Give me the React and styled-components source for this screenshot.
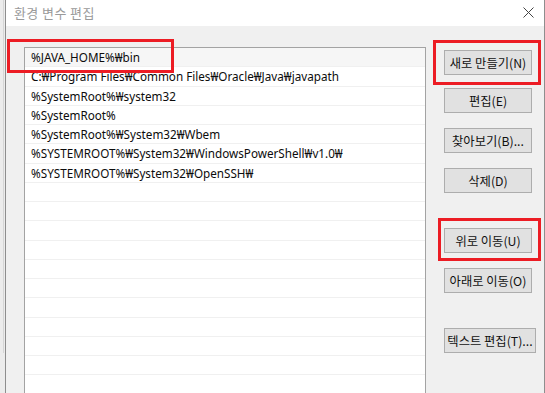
import React from 'react'
import styled, { createGlobalStyle } from 'styled-components'

const GlobalStyle = createGlobalStyle`
  html, body {
    margin: 0;
    padding: 0;
    width: 545px;
    height: 393px;
    overflow: hidden;
    background: #e9e9e9;
  }
  body {
    font-family: "Noto Sans", "Noto Sans CJK KR", sans-serif;
  }
`

const Page = styled.div`
  position: relative;
  display: flex;
  width: 545px;
  height: 393px;
  overflow: hidden;
`

const Strip = styled.div`
  width: 5px;
  flex: none;
  background: #ececec;
  padding-left: 3px;
  box-sizing: border-box;
  div {
    width: 1px;
    height: 353px;
    background: #d6d6d6;
  }
`

const Window = styled.div`
  flex: 1;
  display: flex;
  flex-direction: column;
  border-left: 1px solid #8e8e8e;
  border-right: 1px solid #8e8e8e;
  background: #f0f0f0;
`

const TitleBar = styled.div`
  height: 25px;
  flex: none;
  display: flex;
  align-items: center;
  justify-content: space-between;
  background: #fff;
  padding: 0 10px 1px 8px;
`

const Title = styled.span`
  font-family: "Noto Sans CJK KR", sans-serif;
  font-size: 13px;
  color: #9a9a9a;
  letter-spacing: 0.4px;
`

const Body = styled.div`
  flex: 1;
  display: flex;
  gap: 18px;
  padding: 21px 0 0 18px;
`

const List = styled.div`
  width: 402px;
  flex: none;
  box-sizing: border-box;
  border: 1px solid #a3a3a3;
  border-bottom: none;
  background: #fff;
  overflow: hidden;
`

const Row = styled.div`
  height: 19.25px;
  box-sizing: border-box;
  border-bottom: 1px solid #f0f0f0;
  padding-left: 6px;
  display: flex;
  align-items: center;
  font-size: 11.7px;
  color: #0c0c0c;
  white-space: nowrap;
  background: ${p => (p.$selected ? '#f6f6f6' : '#fff')};
`

const Buttons = styled.div`
  display: flex;
  flex-direction: column;
  align-items: flex-start;
`

const Btn = styled.button`
  width: ${p => p.$width || 88}px;
  height: 25px;
  margin-top: ${p => p.$gap}px;
  padding: 0;
  background: #e1e1e1;
  border: 1px solid #adadad;
  font-family: "Noto Sans CJK KR", sans-serif;
  font-size: 12.3px;
  color: #111;
  white-space: nowrap;
`

const Close = styled.svg`
  width: 11px;
  height: 11px;
`

const Mark = styled.div`
  position: absolute;
  border: 3px solid #ec1c24;
  box-sizing: border-box;
`

const rows = [
  '%JAVA_HOME%₩bin',
  'C:₩Program Files₩Common Files₩Oracle₩Java₩javapath',
  '%SystemRoot%₩system32',
  '%SystemRoot%',
  '%SystemRoot%₩System32₩Wbem',
  '%SYSTEMROOT%₩System32₩WindowsPowerShell₩v1.0₩',
  '%SYSTEMROOT%₩System32₩OpenSSH₩',
]

const buttons = [
  { label: '새로 만들기(N)', gap: 3 },
  { label: '편집(E)', gap: 13 },
  { label: '찾아보기(B)...', gap: 15 },
  { label: '삭제(D)', gap: 15 },
  { label: '위로 이동(U)', gap: 35 },
  { label: '아래로 이동(O)', gap: 15 },
  { label: '텍스트 편집(T)...', gap: 35, width: 92 },
]

export default function App() {
  const filled = [...rows, ...Array(14).fill('')]
  return (
    <Page>
      <GlobalStyle />
      <Strip><div /></Strip>
      <Window>
        <TitleBar>
          <Title>환경 변수 편집</Title>
          <Close viewBox="0 0 11 11">
            <path d="M0.5 0.5 L10.5 10.5 M10.5 0.5 L0.5 10.5" stroke="#444" strokeWidth="1" fill="none" />
          </Close>
        </TitleBar>
        <Body>
          <List>
            {filled.map((r, i) => (
              <Row key={i} $selected={i === 0}>{r}</Row>
            ))}
          </List>
          <Buttons>
            {buttons.map(b => (
              <Btn key={b.label} $gap={b.gap} $width={b.width}>{b.label}</Btn>
            ))}
          </Buttons>
        </Body>
      </Window>
      <Mark style={{ left: 7, top: 39, width: 167, height: 34 }} />
      <Mark style={{ left: 433, top: 40, width: 108, height: 45 }} />
      <Mark style={{ left: 438, top: 218, width: 103, height: 43 }} />
    </Page>
  )
}
